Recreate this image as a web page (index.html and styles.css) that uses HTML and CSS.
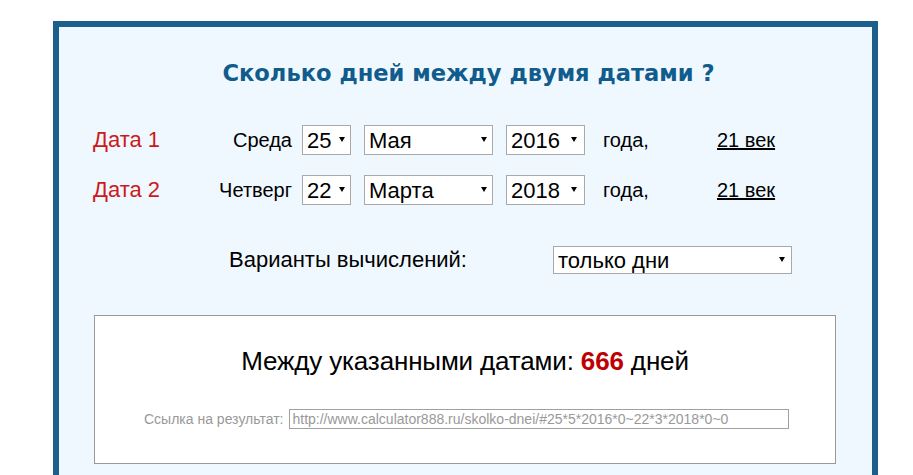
FILE: index.html
```html
<!DOCTYPE html>
<html lang="ru">
<head>
<meta charset="utf-8">
<title>Сколько дней между двумя датами</title>
<link rel="stylesheet" href="styles.css">
</head>
<body>
<div class="page">
  <div class="frame">
    <h1 class="title">Сколько дней между двумя датами ?</h1>

    <div class="date-row">
      <span class="date-label">Дата 1</span>
      <span class="weekday">Среда</span>
      <span class="sel sel-day"><select><option>25</option></select></span>
      <span class="sel sel-month"><select><option>Мая</option></select></span>
      <span class="sel sel-year"><select><option>2016</option></select></span>
      <span class="goda">года,</span>
      <a class="century" href="#">21 век</a>
    </div>

    <div class="date-row">
      <span class="date-label">Дата 2</span>
      <span class="weekday">Четверг</span>
      <span class="sel sel-day"><select><option>22</option></select></span>
      <span class="sel sel-month"><select><option>Марта</option></select></span>
      <span class="sel sel-year"><select><option>2018</option></select></span>
      <span class="goda">года,</span>
      <a class="century" href="#">21 век</a>
    </div>

    <div class="variants-row">
      <span class="variants-label">Варианты вычислений:</span>
      <span class="sel sel-variant"><select><option>только дни</option></select></span>
    </div>

    <div class="result">
      <div class="result-text">Между указанными датами: <b class="num">666</b> дней</div>
      <div class="link-row">
        <span class="link-label">Ссылка на результат:</span>
        <input class="link-input" type="text" value="http://www.calculator888.ru/skolko-dnei/#25*5*2016*0~22*3*2018*0~0" readonly>
      </div>
    </div>
  </div>
</div>
</body>
</html>
```

FILE: styles.css
```css
html, body {
  margin: 0;
  padding: 0;
  background: #ffffff;
}

body {
  font-family: "Liberation Sans", Arial, sans-serif;
  color: #000;
}

.page {
  padding: 21px 0 0 53px;
}

.frame {
  width: 813px;
  height: 600px;
  border: 6px solid #1c5f8a;
  border-bottom: none;
  background: #f0f8ff;
  box-sizing: content-box;
}

.title {
  margin: 32px 0 0 0;
  text-align: center;
  font-family: "DejaVu Sans", Verdana, sans-serif;
  font-weight: bold;
  font-size: 22.6px;
  line-height: 28px;
  color: #105c8c;
  padding-left: 6px;
}

.date-row {
  display: flex;
  align-items: center;
  height: 30px;
  margin-left: 34px;
  font-size: 20px;
}

.title + .date-row { margin-top: 38px; }
.date-row + .date-row { margin-top: 20px; }

.date-label {
  width: 120px;
  font-size: 22px;
  color: #cc1a1a;
}

.weekday {
  width: 79px;
  text-align: right;
  margin-right: 10px;
  font-size: 20px;
}

.sel {
  position: relative;
  display: inline-block;
  height: 30px;
  margin-right: 13px;
}

.sel select {
  appearance: none;
  -webkit-appearance: none;
  display: block;
  width: 100%;
  height: 100%;
  margin: 0;
  padding: 0 0 0 4px;
  border: 1px solid #a9a9a9;
  border-radius: 0;
  background: #ffffff;
  font-family: "Liberation Sans", Arial, sans-serif;
  font-size: 22px;
  color: #000;
}

.sel::after {
  content: "";
  position: absolute;
  right: 6px;
  top: 50%;
  margin-top: -3px;
  border-left: 3px solid transparent;
  border-right: 3px solid transparent;
  border-top: 5px solid #000;
  pointer-events: none;
}

.sel-day { width: 49px; }
.sel-month { width: 129px; }
.sel-year { width: 79px; margin-right: 18px; }

.sel-year::after { right: 8px; }

.goda {
  width: 114px;
  font-size: 20px;
}

.century {
  color: #000;
  font-size: 20px;
  text-decoration: underline;
}

.variants-row {
  display: flex;
  align-items: center;
  height: 28px;
  margin: 41px 0 0 170px;
}

.variants-label {
  width: 324px;
  font-size: 22px;
}

.sel-variant {
  width: 239px;
  height: 28px;
  margin-right: 0;
}

.sel-variant select {
  font-size: 22px;
}

.sel-variant::after { right: 7px; }

.result {
  margin: 41px 0 0 35px;
  width: 740px;
  height: 147px;
  border: 1px solid #999999;
  background: #ffffff;
}

.result-text {
  margin-top: 30px;
  text-align: center;
  font-size: 26px;
  line-height: 30px;
  letter-spacing: -0.15px;
}

.num {
  color: #c00000;
}

.link-row {
  display: flex;
  align-items: center;
  margin: 33px 0 0 49px;
}

.link-label {
  font-size: 14px;
  color: #999999;
  margin-right: 6px;
}

.link-input {
  width: 500px;
  height: 20px;
  box-sizing: border-box;
  margin: 0;
  padding: 0 2px;
  border: 1px solid #a0a0a0;
  font-family: "Liberation Sans", Arial, sans-serif;
  font-size: 14px;
  color: #999999;
  background: #ffffff;
}
```
